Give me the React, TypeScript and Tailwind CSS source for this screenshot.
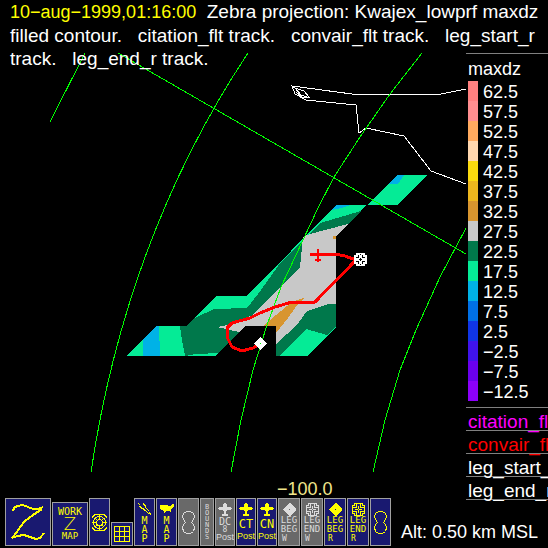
import React from 'react';

interface LegendEntry {
  value: string;
  color: string;
}

const LEGEND: LegendEntry[] = [
  { value: '62.5', color: 'bg-[#ff8080]' },
  { value: '57.5', color: 'bg-[#ff8e90]' },
  { value: '52.5', color: 'bg-[#ffaa5f]' },
  { value: '47.5', color: 'bg-[#ffd7af]' },
  { value: '42.5', color: 'bg-[#fada0f]' },
  { value: '37.5', color: 'bg-[#edb71e]' },
  { value: '32.5', color: 'bg-[#d8952f]' },
  { value: '27.5', color: 'bg-[#c8c8c8]' },
  { value: '22.5', color: 'bg-[#00784b]' },
  { value: '17.5', color: 'bg-[#05eb96]' },
  { value: '12.5', color: 'bg-[#00b2e6]' },
  { value: '7.5', color: 'bg-[#0070e6]' },
  { value: '2.5', color: 'bg-[#1035e6]' },
  { value: '−2.5', color: 'bg-[#4013eb]' },
  { value: '−7.5', color: 'bg-[#6a00ee]' },
  { value: '−12.5', color: 'bg-[#8c00fa]' }
];

const LAYERS = [
  { name: 'citation_flt', color: 'text-[#ff00ff]' },
  { name: 'convair_flt', color: 'text-[#ff0000]' },
  { name: 'leg_start_r', color: 'text-white' },
  { name: 'leg_end_r', color: 'text-white' }
];

const RadarMap: React.FC = () => (
  <svg
    viewBox="0 53 466 419"
    className="block w-full"
    shapeRendering="crispEdges"
    role="img"
    aria-label="Radar reflectivity map"
  >
    {/* Filled contours */}
    <path fill="#05eb96" d="M397 175H427L398 205H368Z" />
    <path fill="#00b2e6" d="M397 175H404L398 184H389Z" />
    <path
      fill="#05eb96"
      d="M336 205H366L336 237V327L307 356H276V326H245L216 356H126L156 326H186L216 296H247Z"
    />
    <path fill="#00b2e6" d="M336 205H350L341 208L331 210Z" />
    <path fill="#00b2e6" d="M143 339L156 326H159L160 356H143Z" />
    <path
      fill="#00784b"
      d="M361 211L320 223L281 262L258 294L247 308L214 309L195 318L186 326H180L182 340L185 356L196 354L219 353L245 326H276L336 304V237Z"
    />
    <path
      fill="#c8c8c8"
      d="M348 224L336 237V304H328L307 311L297 325L276 344V326H245L239 332L217 327L227 325L253 315L280 287L300 267L303 237L310 234Z"
    />
    <path
      fill="#00784b"
      d="M336 304H328L307 311L297 325L276 344V356H279L306 329L327 335L336 327Z"
    />
    <path fill="#d8952f" d="M306 297L292 302L276 315L263 326H276V333L288 318L298 304Z" />
    <path fill="#d8952f" d="M333 236H336V239H333Z" />

    {/* Coastline */}
    <g fill="none" stroke="#ffffff">
      <path d="M466 89L441 94H352L307 88L292 86L295 94L306 100L356 105L359 133L366 128L404 136L431 171L466 184" />
      <path d="M292 87L304 91L309 97L302 97L296 92M295 88L301 95L307 97" />
    </g>

    {/* Lat / lon grid */}
    <g fill="none" stroke="#00ff00">
      <path d="M85 53L50 122" />
      <path d="M118 53L466 254" />
      <path d="M248 53Q126 237 91 472" />
      <path d="M422 53L390 94L360 137L334 177L318 208L303 240L281 287L267 325L253 370L241 420L231 472" />
      <path d="M466 228L440 277L416 330L400 370L385 420L373 472" />
    </g>

    {/* Flight track */}
    <path
      fill="none"
      stroke="#ff0000"
      strokeWidth="3"
      strokeLinejoin="round"
      d="M310 254H335L345 256L356 260L315 302H292L275 307L260 313L250 318L232 323L227 328V337L232 347L242 351L253 348L258 345"
    />
    <path fill="none" stroke="#ff0000" strokeWidth="2" d="M318 249V262M315 260H321" />

    {/* Leg markers */}
    <path fill="#ffffff" d="M260 337L267 344L260 350L254 344Z" />
    <path fill="#00ff00" d="M260 343H261V344H260Z" />
    <g transform="translate(354 253)">
      <path fill="#ffffff" d="M2 0H11V2H13V11H11V13H2V11H0V2H2Z" />
      <path
        fill="none"
        stroke="#000000"
        d="M4.5 2V4.5H2M8.5 2V4.5H11M4.5 11V8.5H2M8.5 11V8.5H11M6.5 5V8M5 6.5H8M6.5 1V2M6.5 11V12"
      />
    </g>
  </svg>
);

const LegEndIcon: React.FC = () => (
  <svg viewBox="0 0 13 13" className="h-[13px] w-[13px] shrink-0" shapeRendering="crispEdges" fill="none" stroke="currentColor">
    <path d="M2.5 .5H10.5V2.5H12.5V10.5H10.5V12.5H2.5V10.5H.5V2.5H2.5Z" />
    <path d="M4.5 1V4.5H1M8.5 1V4.5H12M4.5 12V8.5H1M8.5 12V8.5H12M6.5 3V6M6.5 7V10M3 6.5H6M7 6.5H10" />
  </svg>
);

const LegBeginIcon: React.FC = () => (
  <svg viewBox="0 0 13 13" className="h-[13px] w-[13px] shrink-0" shapeRendering="crispEdges" fill="currentColor">
    <path fillRule="evenodd" d="M6 0H7L13 6V7L7 13H6L0 7V6ZM6 6V7H7V6Z" />
  </svg>
);

const PlaneIcon: React.FC = () => (
  <svg viewBox="0 0 14 14" className="h-[14px] w-[14px] shrink-0" shapeRendering="crispEdges" fill="currentColor">
    <path d="M6 0H8V1H9V4H13V5H14V6H13V7H9V8H8V11H10V13H4V11H6V8H5V7H1V6H0V5H1V4H5V1H6Z" />
  </svg>
);

const LoopIcon: React.FC = () => (
  <svg viewBox="0 0 15 25" className="h-[25px] w-[15px] shrink-0" shapeRendering="crispEdges" fill="none" stroke="currentColor">
    <path d="M5.5 1.5H9.5L12.5 3.5L13.5 6.5L12.5 9.5L10.5 12.5L12.5 14.5L13.5 17.5L12.5 21.5L9.5 23.5H5.5L2.5 21.5L1.5 17.5L2.5 14.5L4.5 12.5L2.5 9.5L1.5 6.5L2.5 3.5Z" />
  </svg>
);

interface ToolButtonProps {
  label: string;
  size: string;
  muted?: boolean;
  children: React.ReactNode;
}

const ToolButton: React.FC<ToolButtonProps> = ({ label, size, muted, children }) => (
  <button
    type="button"
    aria-label={label}
    className={`${size} ${
      muted ? 'bg-[#696969] text-[#dcdcdc]' : 'bg-[#191970] text-[#ffff00]'
    } flex shrink-0 flex-col items-center overflow-hidden border border-[#a0a0a0] font-['DejaVu_Sans_Mono',monospace] text-[9px] leading-[9px]`}
  >
    {children}
  </button>
);

const VerticalLabel: React.FC<{ text: string }> = ({ text }) => (
  <>
    {text.split('').map((letter, i) => (
      <span key={i}>{letter}</span>
    ))}
  </>
);

const PostLabel: React.FC = () => (
  <span className="font-['Liberation_Sans',Arial,sans-serif] text-[9px]">Post</span>
);

const Toolbar: React.FC = () => (
  <nav className="flex items-end gap-px" aria-label="Overlays">
    <ToolButton label="Zebra" size="h-12 w-[46px] justify-center">
      <svg viewBox="0 0 44 46" className="h-[46px] w-[44px]" shapeRendering="crispEdges" fill="none" stroke="currentColor" strokeWidth="2">
        <path d="M7 12L8 9L11 7L17 6L22 8L27 10H32L37 8" />
        <path d="M36 10L27 16L19 22L14 28L11 33L6 39" />
        <path d="M6 39L11 37L18 36L24 38L30 40L34 39L38 34" />
      </svg>
    </ToolButton>
    <ToolButton label="Work map" size="h-11 w-9 justify-between py-1">
      <span className="text-[10px]">WORK</span>
      <span className="font-['DejaVu_Sans',sans-serif] text-[18px] font-extralight leading-[14px]">Z</span>
      <span>MAP</span>
    </ToolButton>
    <ToolButton label="Radar rings" size="h-12 w-[21px] justify-center">
      <svg viewBox="0 0 17 19" className="h-[19px] w-[17px]" shapeRendering="crispEdges" fill="none" stroke="currentColor">
        <circle cx="8.5" cy="9.5" r="6" />
        <circle cx="8.5" cy="9.5" r="3" />
        <path d="M8.5 1V6M8.5 13V18M1 9.5H5M12 9.5H16M1 4.5L4 1.5H13L16 4.5M1 14.5L4 17.5H13L16 14.5M4 5L6 7M13 5L11 7M4 14L6 12M13 14L11 12" />
      </svg>
    </ToolButton>
    <ToolButton label="Grid" size="h-6 w-[22px] justify-center">
      <svg viewBox="0 0 16 16" className="h-4 w-4" shapeRendering="crispEdges" fill="none" stroke="currentColor">
        <path d="M.5 .5H15.5V15.5H.5ZM5.5 0V16M10.5 0V16M0 5.5H16M0 10.5H16" />
      </svg>
    </ToolButton>
    <ToolButton label="Island map" size="h-12 w-[21px] pt-[3px] text-[10px]!">
      <svg viewBox="0 0 15 14" className="h-[14px] w-[15px] shrink-0" shapeRendering="crispEdges" fill="none" stroke="currentColor">
        <path d="M1 1L3 3M2 4L6 7M6 1L9 5M5 6L9 9M8 5L12 9M9 9L12 12M12 10L14 13" />
      </svg>
      <VerticalLabel text="MAP" />
    </ToolButton>
    <ToolButton label="US map" size="h-12 w-[21px] pt-[5px] text-[10px]!">
      <svg viewBox="0 0 14 9" className="mb-[3px] h-[9px] w-[14px] shrink-0" shapeRendering="crispEdges" fill="currentColor">
        <path d="M0 1H8V2H10L12 0H14V2L12 4L11 6V8H10L9 7H6L5 9H4V7L1 6L0 4Z" />
      </svg>
      <VerticalLabel text="MAP" />
    </ToolButton>
    <ToolButton label="Loop off" size="h-12 w-[21px] justify-center" muted>
      <LoopIcon />
    </ToolButton>
    <ToolButton label="Bounds" size="h-12 w-[14px] justify-center text-[7px]! leading-[6px]!" muted>
      <VerticalLabel text="BOUNDS" />
    </ToolButton>
    <ToolButton label="DC8 position" size="h-12 w-5 pt-1" muted>
      <PlaneIcon />
      <span className="text-[10px]">DC</span>
      <span className="text-[8px] leading-[7px]">8</span>
      <PostLabel />
    </ToolButton>
    <ToolButton label="Citation position" size="h-12 w-5 pt-1">
      <PlaneIcon />
      <span className="text-[12px] leading-[15px]">CT</span>
      <PostLabel />
    </ToolButton>
    <ToolButton label="Convair position" size="h-12 w-5 pt-1">
      <PlaneIcon />
      <span className="text-[12px] leading-[15px]">CN</span>
      <PostLabel />
    </ToolButton>
    <ToolButton label="Leg begin W" size="h-12 w-[22px] pt-1" muted>
      <LegBeginIcon />
      <span>LEG</span>
      <span>BEG</span>
      <span className="self-start pl-[3px] text-[8px]">W</span>
    </ToolButton>
    <ToolButton label="Leg end W" size="h-12 w-[22px] pt-1" muted>
      <LegEndIcon />
      <span>LEG</span>
      <span>END</span>
      <span className="self-start pl-[3px] text-[8px]">W</span>
    </ToolButton>
    <ToolButton label="Leg begin R" size="h-12 w-[22px] pt-1">
      <LegBeginIcon />
      <span>LEG</span>
      <span>BEG</span>
      <span className="self-start pl-[3px] text-[8px]">R</span>
    </ToolButton>
    <ToolButton label="Leg end R" size="h-12 w-[22px] pt-1">
      <LegEndIcon />
      <span>LEG</span>
      <span>END</span>
      <span className="self-start pl-[3px] text-[8px]">R</span>
    </ToolButton>
    <ToolButton label="Loop" size="h-12 w-[21px] justify-center">
      <LoopIcon />
    </ToolButton>
  </nav>
);

const App: React.FC = () => {
  return (
    <div className="flex min-h-screen flex-col overflow-hidden bg-black font-['Liberation_Sans',Arial,sans-serif] text-[18px] leading-[23px] text-white">
      {/* Title runs slightly over the top edge of the map */}
      <header className="relative z-10 pl-2.5 text-[19px] whitespace-pre-wrap">
        <time className="text-[18px] text-[#ffff00]">10−aug−1999,01:16:00</time>
        {'  Zebra projection: Kwajex_lowprf maxdz filled contour.   citation_flt track.   convair_flt track.   leg_start_r track.   leg_end_r track.'}
      </header>

      <main className="-mt-[17px] flex">
        <div className="min-w-0 flex-1">
          <RadarMap />
          <p className="pt-1.5 pl-[277px] text-[#f0e68c]">−100.0</p>
        </div>

        <aside className="w-[82px] shrink-0 overflow-hidden border-t border-[#808080]">
          <h2 className="pt-1 pl-0.5">maxdz</h2>
          <ul className="pb-1.5 pl-0.5">
            {LEGEND.map(entry => (
              <li key={entry.value} className="flex h-5 items-center">
                <span className={`h-5 w-2.5 ${entry.color}`} />
                <span className="pt-0.5 pl-[5px]">{entry.value}</span>
              </li>
            ))}
          </ul>
          <ul>
            {LAYERS.map(layer => (
              <li
                key={layer.name}
                className={`h-[23px] border-t border-[#808080] pt-0.5 pl-0.5 text-[19px] whitespace-nowrap ${layer.color}`}
              >
                {layer.name}
              </li>
            ))}
          </ul>
          <hr className="border-[#808080]" />
        </aside>
      </main>

      <footer className="-mt-[3px] flex items-end justify-between pr-2.5 pl-[5px]">
        <Toolbar />
        <p className="pb-0.5">Alt: 0.50 km MSL</p>
      </footer>
    </div>
  );
};

export default App;
